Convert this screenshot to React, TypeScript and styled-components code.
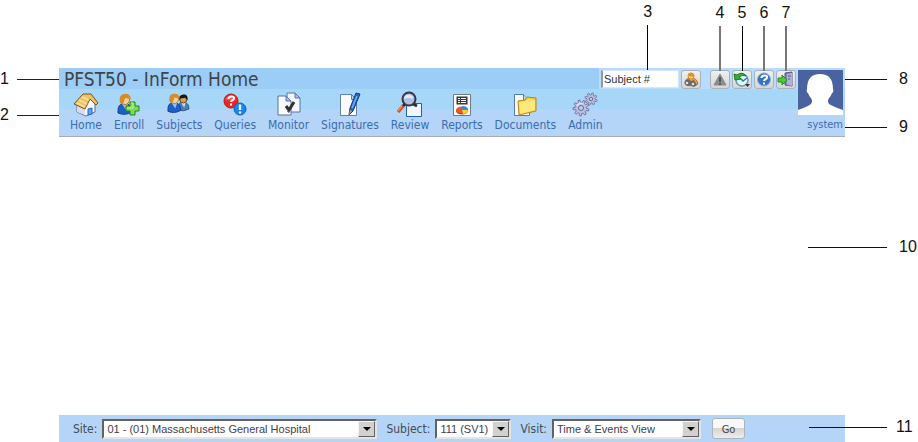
import React from "react";
import styled, { createGlobalStyle } from "styled-components";

const uiFont = `"DejaVu Sans Condensed", "DejaVu Sans", sans-serif`;
const plainFont = `"Liberation Sans", Arial, sans-serif`;

const GlobalStyle = createGlobalStyle`
  * { box-sizing: border-box; }
  body { margin: 0; background: #fff; font-family: ${uiFont}; }
`;

const Page = styled.div`
  display: flex;
  flex-direction: column;
  min-height: 100vh;
  padding: 68px 73px 0 59px;
`;

const Header = styled.header`
  position: relative;
  display: flex;
  background: linear-gradient(#9bcdf7 21px, #a6d7f9 21px, #a6d7f9 41px, #b4d5f8 41px);
  border-bottom: 1px solid #a9aeb6;
`;

const HeaderMain = styled.div`
  flex: 1;
  min-width: 0;
`;

const TopRow = styled.div`
  display: flex;
  justify-content: space-between;
  height: 21px;
`;

const Title = styled.h1`
  margin: 0;
  padding-left: 5px;
  font-size: 19px;
  line-height: 22px;
  font-weight: 400;
  color: #404347;
  white-space: nowrap;
`;

const Tools = styled.div`
  display: flex;
  align-items: center;
  padding: 1px 1px 0 2px;
  background: #b8dcff;
`;

const SearchBox = styled.div`
  position: relative;
  margin-right: 2px;
`;

const SearchInput = styled.input`
  display: block;
  width: 78px;
  height: 18px;
  padding: 0 0 0 1px;
  border: 1px solid #d9e6f3;
  border-left: 2px solid #98989b;
  background: #fff;
  font: 11px ${plainFont};
  color: #333;
  &::placeholder { color: #333; opacity: 1; }
`;

const ToolButton = styled.button`
  position: relative;
  display: flex;
  align-items: center;
  justify-content: center;
  width: 20px;
  height: 19px;
  padding: 0;
  border: 1px solid #a9b2bb;
  border-radius: 3px;
  background: linear-gradient(#f0f0ef, #d3d5d7);
  svg { flex: none; }
`;

const ToolGroup = styled.div`
  display: flex;
  gap: 2px;
  margin-left: 9px;
`;

const Nav = styled.nav`
  display: flex;
  gap: 12px;
  padding: 2px 0 3px 11px;
`;

const NavLink = styled.a`
  display: flex;
  flex-direction: column;
  align-items: center;
  font-size: 12px;
  line-height: 16px;
  color: #3b6caf;
  text-decoration: none;
`;

const Profile = styled.div`
  position: relative;
  display: flex;
  flex-direction: column;
  align-items: center;
  padding: 2px 2px 0 1px;
  background: linear-gradient(#b8dcff 21px, #add9fb 21px, #add9fb 41px, #b4d5f8 41px);
`;

const UserLink = styled.a`
  align-self: flex-end;
  margin-top: 2px;
  font-size: 11px;
  line-height: 16px;
  color: #3b6caf;
  text-decoration: none;
`;

const Content = styled.main`
  position: relative;
  flex: 1;
`;

const Footer = styled.footer`
  position: relative;
  display: flex;
  align-items: center;
  gap: 9px;
  height: 27px;
  padding-left: 14px;
  background: #b4d5f8;
`;

const Field = styled.label`
  display: flex;
  align-items: center;
  gap: 5px;
  font-size: 12px;
  color: #484b50;
  white-space: nowrap;
`;

const SelectFrame = styled.span<{ $width: number }>`
  display: grid;
  grid-template-columns: 1fr 17px;
  width: ${(p) => p.$width}px;
  height: 20px;
  border: 2px solid;
  border-color: #626262 #e2e5e8 #e2e5e8 #626262;
  background: #fff;
`;

const Select = styled.select`
  grid-area: 1 / 1 / 2 / 3;
  width: 100%;
  min-width: 0;
  padding: 0 18px 0 3px;
  border: 0;
  appearance: none;
  background: transparent;
  font: 11px ${plainFont};
  color: #45404a;
`;

const SelectArrow = styled.span`
  grid-area: 1 / 2;
  display: flex;
  align-items: center;
  justify-content: center;
  border: 1px solid;
  border-color: #f5f5f5 #626262 #626262 #f5f5f5;
  background: #d3d1ce;
  pointer-events: none;
`;

const GoButton = styled.button`
  width: 33px;
  height: 21px;
  margin-left: 2px;
  padding: 2px 0 0;
  border: 1px solid #adb3ba;
  border-radius: 3px;
  background: linear-gradient(#f8f8f8 45%, #d5d5d5 50%, #ededed);
  font: 11px ${uiFont};
  color: #444;
`;

const calloutText = `
  font-family: ${plainFont};
  font-size: 16px;
  line-height: 16px;
  color: #111;
`;

const TopCallout = styled.span<{ $soft?: boolean; $at?: string }>`
  ${calloutText}
  position: absolute;
  bottom: 100%;
  left: ${(p) => p.$at ?? "50%"};
  display: flex;
  flex-direction: column;
  align-items: center;
  gap: 5px;
  width: 20px;
  margin-left: -10px;
  pointer-events: none;
  &::after {
    content: "";
    width: ${(p) => (p.$soft ? 2 : 1)}px;
    height: 45px;
    background: ${(p) => (p.$soft ? "#777" : "#000")};
  }
`;

const LeftCallout = styled.span<{ $top: number }>`
  ${calloutText}
  position: absolute;
  top: ${(p) => p.$top}px;
  right: 100%;
  display: flex;
  align-items: center;
  gap: 8px;
  &::after {
    content: "";
    width: 42px;
    height: 1px;
    background: #222;
  }
`;

const RightCallout = styled.span<{ $top: number; $reach: number; $gap: number }>`
  ${calloutText}
  position: absolute;
  top: ${(p) => p.$top}px;
  left: calc(100% - ${(p) => p.$reach}px);
  display: flex;
  align-items: center;
  gap: ${(p) => p.$gap}px;
  &::before {
    content: "";
    width: ${(p) => p.$reach + 42}px;
    height: 1px;
    background: #111;
  }
`;

const Icon = ({ children }: { children: React.ReactNode }) => (
  <svg width="26" height="26" viewBox="0 0 26 26" aria-hidden="true">{children}</svg>
);

const HomeIcon = () => (
  <Icon>
    <path d="M4 13v8l9 4 9-4v-9l-5-6z" fill="#f8f7fb" stroke="#5a68a4" />
    <path d="M4 14v7l8 3v-7z" fill="#d7dbeb" />
    <path d="M10 3h8l7 9-2 2-6-6-5 10-11-5z" fill="#ecc268" stroke="#80501c" strokeLinejoin="round" />
    <path d="M4 12l8 4M6 9l8 4M9 6l7 3" stroke="#fbe09a" strokeWidth="1.5" />
    <path d="M15 18l4-1v6l-4 1z" fill="#5aa6f0" stroke="#2460b8" />
  </Icon>
);

const Person = ({ dark = false }: { dark?: boolean }) => (
  <>
    <path d="M1 19q0-7 5-7h4q5 1 5 8-7 4-14 1z" fill={dark ? "#4b7fae" : "#1c5fc6"} stroke={dark ? "#2a4b75" : "#123f92"} />
    <path d="M5 12l4 6 2-6z" fill={dark ? "#c8e0f1" : "#8fc2f6"} />
    <circle cx="8" cy="8" r="4.5" fill={dark ? "#d9a04f" : "#f7cf98"} stroke={dark ? "#4a3218" : "#b3742b"} />
    <path d={dark ? "M2 7q2-6 8-5 4 1 3 7l-3-3q-4 1-6 1l-1 2z" : "M3 11q-2-8 4-9 6-1 7 5l-6-1q-1 5-3 6z"} fill={dark ? "#151719" : "#d58a2c"} />
  </>
);

const EnrollIcon = () => (
  <Icon>
    <g transform="translate(1 1)"><Person /></g>
    <path d="M14 11h5v4h4v5h-4v4h-5v-4h-4v-5h4z" fill="#7cdb50" stroke="#238326" />
    <path d="M15 12h2v5h-6" stroke="#c7f5a1" fill="none" />
  </Icon>
);

const SubjectsIcon = () => (
  <Icon>
    <g transform="translate(11 2) scale(.8)"><Person dark /></g>
    <g transform="translate(1 1) scale(.92)"><Person /></g>
  </Icon>
);

const QueriesIcon = () => (
  <Icon>
    <circle cx="9" cy="10" r="7" fill="#e72724" stroke="#c01218" />
    <path d="M3 9a6 5 0 0 1 11-2q-3 3-11 2z" fill="#ff766d" opacity=".6" />
    <path d="M6.500 8q0-2.500 3-2.500t2.500 2c0 2-3 1.500-3 3.500M9 12.500v2" fill="none" stroke="#fff" strokeWidth="2" />
    <circle cx="18" cy="18" r="6" fill="#1686ee" stroke="#0b61c6" />
    <path d="M18 13.500v5.500M18 20.500v2" stroke="#fff" strokeWidth="2.400" />
  </Icon>
);

const MonitorIcon = () => (
  <Icon>
    <path d="M11 2h8l5 5v14H11z" fill="#f4f7ff" stroke="#5673a5" />
    <path d="M19 2v5h5z" fill="#a7c4ee" stroke="#5673a5" />
    <path d="M2 5h8l5 5v14H2z" fill="#fbfcff" stroke="#5673a5" />
    <path d="M10 5v5h5z" fill="#a7c4ee" stroke="#5673a5" />
    <path d="M10 15l3 4 5-8" fill="none" stroke="#333" strokeWidth="3" />
    <path d="M11 20l2 2" stroke="#888" />
  </Icon>
);

const SignaturesIcon = () => (
  <Icon>
    <path d="M3.500 3.500h11l5 5v16h-16z" fill="#f9fbff" stroke="#5f7fae" />
    <path d="M14.500 3.500v5h5z" fill="#afcaef" stroke="#5f7fae" />
    <path d="M19 2l4 1-7 17-4 4 1-7z" fill="#2167c7" stroke="#123d82" />
    <path d="M20 5l-5 12" stroke="#78b4f2" strokeWidth="1.500" />
    <path d="M13 19l2 1-3 4z" fill="#c9a563" />
  </Icon>
);

const ReviewIcon = () => (
  <Icon>
    <path d="M9.500 12.500h15v13h-15z" fill="#eff6ff" stroke="#1e62b5" />
    <path d="M6 15l-5 6" stroke="#e04a1c" strokeWidth="3.500" />
    <path d="M5 15l-4 5" stroke="#ffab74" />
    <path d="M6 15l3-3M16 13l4 2" stroke="#282b3a" strokeWidth="3" />
    <circle cx="12" cy="8" r="6.500" fill="#b0bdde" stroke="#343546" strokeWidth="2" />
    <path d="M7 8q1-5 6-4 4 1 3 4-5-2-9 0z" fill="#edf3ff" opacity=".8" />
  </Icon>
);

const ReportsIcon = () => (
  <Icon>
    <path d="M4.500 3.500h17v21h-17z" fill="#fbfcff" stroke="#727782" />
    <path d="M7.500 5.500h11v8h-11z" fill="#34373c" />
    <path d="M9 7h2v1H9zM12 7h5v1h-5zM9 9h2v1H9zM12 9h5v1h-5zM9 11h2v1H9zM12 11h5v1h-5z" fill="#fff" />
    <ellipse cx="13" cy="20" rx="6" ry="3.500" fill="#a33c22" />
    <ellipse cx="13" cy="19" rx="6" ry="3.500" fill="#e65a24" />
    <path d="M13 19v-4q6 0 6 4z" fill="#3d87d4" />
    <path d="M13 19h6q0 4-5 4z" fill="#f6ce28" />
  </Icon>
);

const DocumentsIcon = () => (
  <Icon>
    <path d="M2.500 3.500h9l6 6v15h-15z" fill="#f9fcff" stroke="#527cad" />
    <path d="M11.500 3.500v6h6" fill="#b9d4f2" stroke="#527cad" />
    <path d="M6 10l7-1 2-3 9 1v13L7 24z" fill="#f4ca3a" stroke="#ba8418" />
    <path d="M7 11l7-1 2-2 7 1v10L8 23z" fill="#ffe978" />
  </Icon>
);

// Outline of a toothed wheel: each tooth takes four points round the centre.
const gearPath = (cx: number, cy: number, inner: number, outer: number, teeth: number) => {
  const points: string[] = [];
  for (let i = 0; i < teeth; i += 1) {
    [[0.05, inner], [0.2, outer], [0.55, outer], [0.7, inner]].forEach(([part, radius]) => {
      const angle = ((i + part) / teeth) * Math.PI * 2;
      points.push(`${(cx + Math.cos(angle) * radius).toFixed(2)} ${(cy + Math.sin(angle) * radius).toFixed(2)}`);
    });
  }
  return `M${points.join("L")}z`;
};

const AdminIcon = () => (
  <Icon>
    <path d={gearPath(9, 17, 5.5, 8, 9)} fill="#bcbedd" stroke="#7479a8" />
    <path d="M5 15q2-4 6-2" fill="none" stroke="#e3e4f4" strokeWidth="1.5" />
    <circle cx="9" cy="17" r="2.500" fill="#b4d5f8" stroke="#62678f" />
    <path d={gearPath(19, 8, 4, 6.2, 8)} fill="#c3c4df" stroke="#7b7ea6" />
    <circle cx="19" cy="8" r="1.800" fill="#a6d7f9" stroke="#62678f" />
  </Icon>
);

const SmallIcon = ({ children }: { children: React.ReactNode }) => (
  <svg width="18" height="17" viewBox="0 0 18 17" aria-hidden="true">{children}</svg>
);

const FindIcon = () => (
  <SmallIcon>
    <path d="M3 12q0-5 6-5t7 6l-6 2z" fill="#efa443" stroke="#c06b1b" />
    <circle cx="9" cy="5" r="3" fill="#f8d394" stroke="#d78824" />
    <path d="M6 5q0-4 4-3 3 1 2 4z" fill="#dc942d" />
    <path d="M4 9l3-1 2 2 3-1 3 5-3 2-3-2-4 1-2-3z" fill="#6a6d76" />
    <circle cx="5" cy="12" r="2" fill="#dbe2e7" stroke="#555" />
    <circle cx="11" cy="13" r="2" fill="#dbe2e7" stroke="#555" />
    <path d="M5 14l3 1" stroke="#d44936" />
  </SmallIcon>
);

const WarningIcon = () => (
  <SmallIcon>
    <path d="M9 3l6 11H3z" fill="#8b8c8e" stroke="#8b8c8e" strokeLinejoin="round" />
    <path d="M9 6v5M9 12v2" stroke="#444" strokeWidth="1.500" />
  </SmallIcon>
);

const HistoryIcon = () => (
  <SmallIcon>
    <circle cx="9" cy="9" r="6" fill="#e3f5fa" stroke="#5f9db8" strokeWidth="1.500" />
    <path d="M7 7l3 3 4-3" fill="none" stroke="#3578a0" strokeWidth="1.500" />
    <path d="M1 3l1 6 6-1-2-2q4-3 7-1Q9 0 4 4z" fill="#36ad38" stroke="#187c29" />
    <path d="M12 13h5l-2.500 3z" fill="#333" />
  </SmallIcon>
);

const HelpIcon = () => (
  <SmallIcon>
    <circle cx="9" cy="8.500" r="6.500" fill="#3872bd" stroke="#8dacd5" />
    <path d="M6.500 7q0-2.500 3-2.500t2.500 2c0 2-3 1.500-3 3.500M9 11.500v2" fill="none" stroke="#fff" strokeWidth="2" />
  </SmallIcon>
);

const ExitIcon = () => (
  <SmallIcon>
    <path d="M8 2l7-1v14l-7-1z" fill="#8282b7" stroke="#585783" />
    <path d="M10 3l5-1v13l-5-1z" fill="#b1afd2" />
    <path d="M11 5h3M11 8h2" stroke="#5e5b8c" />
    <path d="M1 7h4V4l5 5-5 5v-3H1z" fill="#51c838" stroke="#218c24" />
  </SmallIcon>
);

const AvatarIcon = () => (
  <svg width="45" height="45" viewBox="0 0 45 45" role="img" aria-label="Profile picture">
    <path d="M0 0h45v45H0z" fill="#4963a0" />
    <path d="M0 45v-5q9-3 13-6 2-3 0-6-2-2-3-5-2-1-1-4Q9 4 22 4t13 15q1 3-1 4-1 3-3 5-2 3 0 6 5 3 14 6v5z" fill="#fff" />
  </svg>
);

const DropArrow = () => (
  <SelectArrow>
    <svg width="8" height="4" viewBox="0 0 8 4" aria-hidden="true"><path d="M0 0h8L4 4z" fill="#000" /></svg>
  </SelectArrow>
);

const navItems = [
  { label: "Home", Glyph: HomeIcon },
  { label: "Enroll", Glyph: EnrollIcon },
  { label: "Subjects", Glyph: SubjectsIcon },
  { label: "Queries", Glyph: QueriesIcon },
  { label: "Monitor", Glyph: MonitorIcon },
  { label: "Signatures", Glyph: SignaturesIcon },
  { label: "Review", Glyph: ReviewIcon },
  { label: "Reports", Glyph: ReportsIcon },
  { label: "Documents", Glyph: DocumentsIcon },
  { label: "Admin", Glyph: AdminIcon },
];

const tools = [
  { label: "Alerts", Glyph: WarningIcon, mark: 4, soft: true },
  { label: "History", Glyph: HistoryIcon, mark: 5, soft: false },
  { label: "Help", Glyph: HelpIcon, mark: 6, soft: true },
  { label: "Log out", Glyph: ExitIcon, mark: 7, soft: true },
];

const fields = [
  { id: "site", label: "Site:", value: "01 - (01) Massachusetts General Hospital", width: 275 },
  { id: "subject", label: "Subject:", value: "111 (SV1)", width: 76 },
  { id: "visit", label: "Visit:", value: "Time & Events View", width: 149 },
];

export default function App() {
  return (
    <>
      <GlobalStyle />
      <Page>
        <Header>
          <LeftCallout $top={3}>1</LeftCallout>
          <LeftCallout $top={39}>2</LeftCallout>
          <HeaderMain>
            <TopRow>
              <Title>PFST50 - InForm Home</Title>
              <Tools>
                <SearchBox>
                  <SearchInput aria-label="Subject number" placeholder="Subject #" />
                  <TopCallout $at="60%">3</TopCallout>
                </SearchBox>
                <ToolButton type="button" aria-label="Find subject"><FindIcon /></ToolButton>
                <ToolGroup>
                  {tools.map(({ label, Glyph, mark, soft }) => (
                    <ToolButton key={label} type="button" aria-label={label}>
                      <Glyph />
                      <TopCallout $soft={soft}>{mark}</TopCallout>
                    </ToolButton>
                  ))}
                </ToolGroup>
              </Tools>
            </TopRow>
            <Nav>
              {navItems.map(({ label, Glyph }) => (
                <NavLink key={label} href="#"><Glyph />{label}</NavLink>
              ))}
            </Nav>
          </HeaderMain>
          <Profile>
            <AvatarIcon />
            <UserLink href="#">system</UserLink>
          </Profile>
          <RightCallout $top={3} $reach={0} $gap={12}>8</RightCallout>
          <RightCallout $top={51} $reach={0} $gap={12}>9</RightCallout>
        </Header>
        <Content>
          <RightCallout $top={102} $reach={37} $gap={12}>10</RightCallout>
        </Content>
        <Footer>
          {fields.map((f) => (
            <Field key={f.id} htmlFor={f.id}>
              {f.label}
              <SelectFrame $width={f.width}>
                <Select id={f.id}><option>{f.value}</option></Select>
                <DropArrow />
              </SelectFrame>
            </Field>
          ))}
          <GoButton type="button">Go</GoButton>
          <RightCallout $top={4} $reach={36} $gap={9}>11</RightCallout>
        </Footer>
      </Page>
    </>
  );
}
